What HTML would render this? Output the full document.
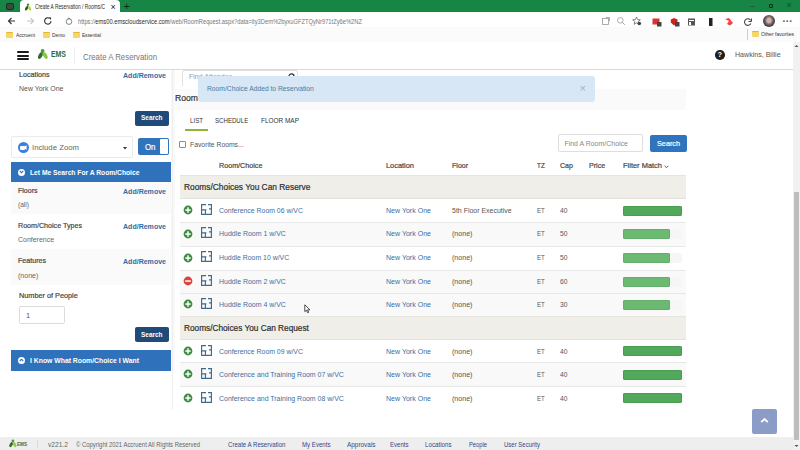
<!DOCTYPE html>
<html><head><meta charset="utf-8">
<style>
*{box-sizing:border-box;margin:0;padding:0}
html,body{width:800px;height:450px;overflow:hidden;background:#fff;font-family:"Liberation Sans",sans-serif;color:#333}
.abs{position:absolute}
.t{position:absolute;white-space:nowrap}
</style></head><body>
<div class="abs" style="left:0px;top:0px;width:800px;height:12.5px;background:#178543;"></div>
<div class="abs" style="left:120px;top:11.5px;width:680px;height:1px;background:#0f6b35;"></div>
<div class="abs" style="left:0px;top:11.5px;width:20px;height:1px;background:#0f6b35;"></div>
<div class="abs" style="left:20px;top:0px;width:100px;height:12px;background:#ffffff;border-radius:4px 4px 0 0;"></div>
<div class="abs" style="left:0px;top:12px;width:800px;height:15px;background:#ffffff;"></div>
<div class="abs" style="left:60px;top:13px;width:586px;height:13px;background:#ffffff;border-radius:7px;"></div>
<div class="abs" style="left:0px;top:27px;width:800px;height:15px;background:#fbfbfb;"></div>
<div class="abs" style="left:0px;top:41.5px;width:800px;height:1px;background:#e0e0e0;"></div>
<div class="abs" style="left:0px;top:42px;width:793px;height:27px;background:#ffffff;"></div>
<div class="abs" style="left:0px;top:69px;width:793px;height:1px;background:#dadada;"></div>
<div class="abs" style="left:0px;top:70px;width:793px;height:367px;background:#ffffff;"></div>
<div class="abs" style="left:171px;top:70px;width:4px;height:300px;background:#f9f9f9;"></div>
<div class="abs" style="left:0px;top:437px;width:793px;height:13px;background:#eeeeee;"></div>
<div class="abs" style="left:793px;top:42px;width:7px;height:408px;background:#f1f1f1;"></div>
<div class="abs" style="left:794px;top:192px;width:5px;height:248px;background:#bdbdbd;"></div>
<svg class="abs" style="left:793px;top:43px" width="7" height="6" viewBox="0 0 7 6"><path d="M1.5 4L3.5 2L5.5 4Z" fill="#555"/></svg>
<svg class="abs" style="left:793px;top:443px" width="7" height="6" viewBox="0 0 7 6"><path d="M1.5 2L3.5 4L5.5 2Z" fill="#555"/></svg>
<div class="t" style="left:35.0px;top:3.9px;font-size:6.30px;line-height:6.30px;color:#2a2a2a;transform:scaleX(0.769);transform-origin:0 0;">Create A Reservation / Rooms/C</div>
<div class="t" style="left:110.5px;top:2.6px;font-size:9.00px;line-height:9.00px;color:#222;">×</div>
<div class="t" style="left:123.5px;top:1.1px;font-size:11.00px;line-height:11.00px;color:#0a2a14;">+</div>
<div class="abs" style="left:5.5px;top:3px;width:8px;height:7px;background:#3b4a40;border-radius:2px;border:1px solid #1d2a22;"></div>
<svg class="abs" style="left:24px;top:3px" width="8" height="8" viewBox="0 0 8 8"><ellipse cx="2.6" cy="5.3" rx="1.3" ry="2.4" transform="rotate(25 2.6 5.3)" fill="#2a5a2a"/><ellipse cx="5.6" cy="5.3" rx="1.3" ry="2.4" transform="rotate(-25 5.6 5.3)" fill="#b5d33a"/><circle cx="4" cy="1.8" r="1.2" fill="#4a8a3a"/></svg>
<svg class="abs" style="left:7px;top:16px" width="9" height="10" viewBox="0 0 9 10"><path d="M8 5H1.5M4.5 2L1.5 5L4.5 8" stroke="#333" stroke-width="1.1" fill="none"/></svg>
<svg class="abs" style="left:26px;top:16px" width="9" height="10" viewBox="0 0 9 10"><path d="M1 5H7.5M4.5 2L7.5 5L4.5 8" stroke="#c8c8c8" stroke-width="1.1" fill="none"/></svg>
<svg class="abs" style="left:43px;top:16px" width="10" height="10" viewBox="0 0 10 10"><path d="M8 5A3.2 3.2 0 1 1 6.6 2.3" stroke="#333" stroke-width="1.1" fill="none"/><path d="M5.6 1.2L8.2 1.5L7.8 4Z" fill="#333"/></svg>
<svg class="abs" style="left:65px;top:16px" width="8" height="10" viewBox="0 0 8 10"><circle cx="4" cy="5.6" r="2.8" stroke="#777" stroke-width="0.9" fill="none"/><path d="M2.6 3.2L4 1.8L5.4 3.2" stroke="#777" stroke-width="0.9" fill="none"/></svg>
<div class="t" style="left:78px;top:17.8px;font-size:6.8px;line-height:8px;color:#777;transform-origin:0 0;transform:scaleX(0.848);">https://<span style="color:#2a2a2a">ems00.emscloudservice.com</span>/web/RoomRequest.aspx?data=ity3Dem%2byxuGFZTQyNr971tZy6e%2NZ</div>
<svg class="abs" style="left:601px;top:16px" width="10" height="10" viewBox="0 0 10 10"><rect x="1.5" y="2.5" width="6" height="6" stroke="#999" stroke-width="0.8" fill="none"/><path d="M5 1.5H8.5V5" stroke="#999" stroke-width="0.8" fill="none"/></svg>
<svg class="abs" style="left:616px;top:16px" width="10" height="10" viewBox="0 0 10 10"><circle cx="4.3" cy="4.3" r="2.8" stroke="#999" stroke-width="0.8" fill="none"/><path d="M6.3 6.3L8.8 8.8" stroke="#999" stroke-width="0.9"/></svg>
<svg class="abs" style="left:632px;top:16px" width="10" height="10" viewBox="0 0 10 10"><path d="M4.5 1L5.6 3.6L8.3 3.8L6.2 5.6L6.9 8.3L4.5 6.8L2.1 8.3L2.8 5.6L0.7 3.8L3.4 3.6Z" stroke="#666" stroke-width="0.8" fill="none"/><circle cx="7.3" cy="7.5" r="1.8" fill="#444"/></svg>
<svg class="abs" style="left:652px;top:17px" width="10" height="10" viewBox="0 0 10 10"><rect x="0.5" y="1.5" width="7" height="6" fill="#d33" /><rect x="5" y="5" width="4.5" height="4.5" fill="#444"/></svg>
<svg class="abs" style="left:670px;top:17px" width="10" height="10" viewBox="0 0 10 10"><path d="M0.8 2.5L4 1L7.5 2.5V5.5L4 8.5L0.8 5.5Z" fill="#c22"/><rect x="5" y="5" width="4.5" height="4.5" fill="#444"/></svg>
<svg class="abs" style="left:687px;top:17px" width="10" height="10" viewBox="0 0 10 10"><rect x="1" y="1.5" width="7" height="7" fill="#555"/><rect x="2" y="3" width="5" height="1" fill="#fff"/><rect x="2" y="5" width="2" height="3" fill="#fff"/></svg>
<svg class="abs" style="left:706px;top:17px" width="10" height="10" viewBox="0 0 10 10"><rect x="3" y="1" width="3.5" height="8" fill="#222"/></svg>
<svg class="abs" style="left:724px;top:17px" width="10" height="10" viewBox="0 0 10 10"><path d="M1 2L5 4L3 7L6 8.5L9 6L5 1Z" fill="#e44"/></svg>
<svg class="abs" style="left:743px;top:17px" width="10" height="10" viewBox="0 0 10 10"><path d="M7.6 3.3A3.3 3.3 0 1 0 7.8 6.5" stroke="#444" stroke-width="1.1" fill="none"/><path d="M5.5 4.5H8.5V1.5" stroke="#444" stroke-width="1" fill="none"/></svg>
<div class="abs" style="left:763px;top:15px;width:12px;height:12px;border-radius:50%;background:radial-gradient(ellipse at 50% 45%,#d2b4a6 0 22%,#8a7670 38%,#4a4650 60%,#2e2e34 80%);"></div>
<div class="t" style="left:782.5px;top:16.6px;font-size:10.00px;line-height:10.00px;color:#555;font-weight:bold;">···</div>
<div class="abs" style="left:750px;top:5.5px;width:5px;height:1px;background:#245c35;"></div>
<div class="abs" style="left:768.5px;top:3.5px;width:4.5px;height:4.5px;background:transparent;border:1.2px solid #0a2a14;border-radius:1px;"></div>
<div class="t" style="left:786.5px;top:1.4px;font-size:9.00px;line-height:9.00px;color:#1d4a2a;">×</div>
<div class="abs" style="left:6px;top:32.0px;width:6.5px;height:6px;background:#f5d766;border-radius:1px;border-top:1.5px solid #e3b53a"></div>
<div class="t" style="left:16.0px;top:32.1px;font-size:6.00px;line-height:6.00px;color:#333;transform:scaleX(0.802);transform-origin:0 0;">Accruent</div>
<div class="abs" style="left:43px;top:32.0px;width:6.5px;height:6px;background:#f5d766;border-radius:1px;border-top:1.5px solid #e3b53a"></div>
<div class="t" style="left:52.0px;top:32.1px;font-size:6.00px;line-height:6.00px;color:#333;transform:scaleX(0.812);transform-origin:0 0;">Demo</div>
<div class="abs" style="left:73px;top:32.0px;width:6.5px;height:6px;background:#f5d766;border-radius:1px;border-top:1.5px solid #e3b53a"></div>
<div class="t" style="left:82.0px;top:32.1px;font-size:6.00px;line-height:6.00px;color:#333;transform:scaleX(0.780);transform-origin:0 0;">Essential</div>
<div class="abs" style="left:747px;top:29px;width:1px;height:11px;background:#cfcfcf;"></div>
<div class="abs" style="left:752px;top:31.0px;width:6.5px;height:6px;background:#f5d766;border-radius:1px;border-top:1.5px solid #e3b53a"></div>
<div class="t" style="left:761.0px;top:31.1px;font-size:6.00px;line-height:6.00px;color:#333;transform:scaleX(0.839);transform-origin:0 0;">Other favorites</div>
<div class="abs" style="left:16.5px;top:50.8px;width:12px;height:2px;background:#1a1a1a;border-radius:1px;"></div>
<div class="abs" style="left:16.5px;top:54.6px;width:12px;height:2px;background:#1a1a1a;border-radius:1px;"></div>
<div class="abs" style="left:16.5px;top:58.4px;width:12px;height:2px;background:#1a1a1a;border-radius:1px;"></div>
<svg class="abs" style="left:36px;top:48px" width="14" height="13" viewBox="0 0 14 13"><ellipse cx="6.6" cy="2.9" rx="1.9" ry="2" fill="#4f9a3c"/><ellipse cx="4.4" cy="7.6" rx="1.9" ry="3.6" transform="rotate(28 4.4 7.6)" fill="#2f6d2f"/><ellipse cx="9.2" cy="7.6" rx="1.9" ry="3.6" transform="rotate(-28 9.2 7.6)" fill="#8dc440"/></svg>
<div class="t" style="left:51.0px;top:51.2px;font-size:8.20px;line-height:8.20px;color:#2f6a38;font-weight:bold;transform:scaleX(0.844);transform-origin:0 0;">EMS</div>
<div class="abs" style="left:74px;top:47px;width:1px;height:17px;background:#eeeeee;"></div>
<div class="t" style="left:83.0px;top:52.8px;font-size:8.60px;line-height:8.60px;color:#777;transform:scaleX(0.911);transform-origin:0 0;">Create A Reservation</div>
<div class="abs" style="left:715px;top:50.2px;width:9.6px;height:9.6px;border-radius:50%;background:#1e1e1e;color:#fff;font:bold 7.4px/9.8px 'Liberation Sans',sans-serif;text-align:center">?</div>
<div class="t" style="left:735.4px;top:51.4px;font-size:8.00px;line-height:8.00px;color:#555;transform:scaleX(0.884);transform-origin:0 0;">Hawkins, Billie</div>
<div class="t" style="left:18.8px;top:71.3px;font-size:7.60px;line-height:7.60px;color:#444;-webkit-text-stroke:0.2px #444;transform:scaleX(0.938);transform-origin:0 0;">Locations</div>
<div class="t" style="left:123.0px;top:71.6px;font-size:7.00px;line-height:7.00px;color:#356a9e;font-weight:bold;transform:scaleX(1.005);transform-origin:0 0;">Add/Remove</div>
<div class="t" style="left:18.8px;top:85.0px;font-size:7.60px;line-height:7.60px;color:#555;transform:scaleX(0.916);transform-origin:0 0;">New York One</div>
<div class="abs" style="left:135px;top:110.5px;width:34px;height:15px;background:#1f4b7a;border-radius:2px;"></div>
<div class="t" style="left:141.0px;top:114.3px;font-size:7.60px;line-height:7.60px;color:#fff;font-weight:bold;transform:scaleX(0.848);transform-origin:0 0;">Search</div>
<div class="abs" style="left:10.5px;top:136px;width:122px;height:22px;background:#fff;border:1px solid #ebebeb;border-radius:2px;"></div>
<div class="abs" style="left:17.5px;top:142px;width:11px;height:11px;border-radius:50%;background:#3b82e0"></div>
<div class="abs" style="left:20px;top:145.5px;width:4.5px;height:4px;background:#fff;border-radius:1px;"></div>
<svg class="abs" style="left:24px;top:145px" width="3" height="5" viewBox="0 0 3 5"><path d="M0 1.8L2.6 0.3V4.7L0 3.2Z" fill="#fff"/></svg>
<div class="t" style="left:32.0px;top:143.7px;font-size:7.76px;line-height:7.76px;color:#666;">Include Zoom</div>
<svg class="abs" style="left:122.5px;top:146.5px" width="4" height="3" viewBox="0 0 4 3"><path d="M0 0H4L2 2.5Z" fill="#333"/></svg>
<div class="abs" style="left:138px;top:137.5px;width:31px;height:17.5px;background:#2f74bd;border-radius:2px;"></div>
<div class="abs" style="left:160px;top:138.5px;width:8px;height:15.5px;background:#fff;border-radius:1px;"></div>
<div class="t" style="left:145.0px;top:142.6px;font-size:8.50px;line-height:8.50px;color:#fff;-webkit-text-stroke:0.2px #fff;transform:scaleX(0.926);transform-origin:0 0;">On</div>
<div class="abs" style="left:10.5px;top:162px;width:160.5px;height:20px;background:#2f72bb;"></div>
<div class="abs" style="left:17.5px;top:168.5px;width:7px;height:7px;border-radius:50%;background:#fff"></div>
<svg class="abs" style="left:18.5px;top:170px" width="5" height="4" viewBox="0 0 5 4"><path d="M0.8 1L2.5 2.8L4.2 1" stroke="#2f72bb" stroke-width="1.1" fill="none"/></svg>
<div class="t" style="left:29.5px;top:168.9px;font-size:7.60px;line-height:7.60px;color:#fff;font-weight:bold;transform:scaleX(0.883);transform-origin:0 0;">Let Me Search For A Room/Choice</div>
<div class="abs" style="left:10.5px;top:182px;width:160.5px;height:32px;background:#fafafa;"></div>
<div class="abs" style="left:10.5px;top:249px;width:160.5px;height:36px;background:#fafafa;"></div>
<div class="t" style="left:18.3px;top:187.3px;font-size:7.60px;line-height:7.60px;color:#444;-webkit-text-stroke:0.2px #444;transform:scaleX(0.928);transform-origin:0 0;">Floors</div>
<div class="t" style="left:123.0px;top:187.6px;font-size:7.00px;line-height:7.00px;color:#356a9e;font-weight:bold;transform:scaleX(1.005);transform-origin:0 0;">Add/Remove</div>
<div class="t" style="left:18.3px;top:201.1px;font-size:7.00px;line-height:7.00px;color:#666;transform:scaleX(0.943);transform-origin:0 0;">(all)</div>
<div class="t" style="left:18.3px;top:222.3px;font-size:7.60px;line-height:7.60px;color:#444;-webkit-text-stroke:0.2px #444;transform:scaleX(0.937);transform-origin:0 0;">Room/Choice Types</div>
<div class="t" style="left:123.0px;top:222.6px;font-size:7.00px;line-height:7.00px;color:#356a9e;font-weight:bold;transform:scaleX(1.005);transform-origin:0 0;">Add/Remove</div>
<div class="t" style="left:18.3px;top:236.0px;font-size:7.00px;line-height:7.00px;color:#666;transform:scaleX(0.995);transform-origin:0 0;">Conference</div>
<div class="t" style="left:18.3px;top:257.3px;font-size:7.60px;line-height:7.60px;color:#444;-webkit-text-stroke:0.2px #444;transform:scaleX(0.934);transform-origin:0 0;">Features</div>
<div class="t" style="left:123.0px;top:257.6px;font-size:7.00px;line-height:7.00px;color:#356a9e;font-weight:bold;transform:scaleX(1.005);transform-origin:0 0;">Add/Remove</div>
<div class="t" style="left:18.3px;top:271.6px;font-size:7.00px;line-height:7.00px;color:#666;transform:scaleX(1.003);transform-origin:0 0;">(none)</div>
<div class="t" style="left:18.8px;top:292.3px;font-size:7.60px;line-height:7.60px;color:#444;-webkit-text-stroke:0.2px #444;transform:scaleX(0.959);transform-origin:0 0;">Number of People</div>
<div class="abs" style="left:18.75px;top:306px;width:46px;height:18px;background:#fff;border:1px solid #dcdcdc;border-radius:2px;"></div>
<div class="t" style="left:26.0px;top:311.8px;font-size:7.50px;line-height:7.50px;color:#555;">1</div>
<div class="abs" style="left:135px;top:327px;width:34px;height:15px;background:#1f4b7a;border-radius:2px;"></div>
<div class="t" style="left:141.0px;top:331.3px;font-size:7.60px;line-height:7.60px;color:#fff;font-weight:bold;transform:scaleX(0.848);transform-origin:0 0;">Search</div>
<div class="abs" style="left:10.5px;top:350px;width:160.5px;height:20.5px;background:#2f72bb;"></div>
<div class="abs" style="left:17.5px;top:356.5px;width:7px;height:7px;border-radius:50%;background:#fff"></div>
<svg class="abs" style="left:18.5px;top:358px" width="5" height="4" viewBox="0 0 5 4"><path d="M0.8 3L2.5 1.2L4.2 3" stroke="#2f72bb" stroke-width="1.1" fill="none"/></svg>
<div class="t" style="left:29.5px;top:357.3px;font-size:7.60px;line-height:7.60px;color:#fff;font-weight:bold;transform:scaleX(0.899);transform-origin:0 0;">I Know What Room/Choice I Want</div>
<div class="abs" style="left:172px;top:70px;width:1px;height:340px;background:#efefef;"></div>
<div class="abs" style="left:180px;top:70px;width:125px;height:16px;overflow:hidden">
<div class="abs" style="left:2.4px;top:0px;width:115.6px;height:18px;background:#fff;border:1px solid #e0e0e0;border-radius:2px;"></div>
<div class="t" style="left:9.0px;top:2.5px;font-size:7.60px;line-height:7.60px;color:#999;transform:scaleX(0.928);transform-origin:0 0;">Find Attendee</div>
<svg class="abs" style="left:106.5px;top:2px" width="9" height="9" viewBox="0 0 9 9"><circle cx="4.5" cy="4.5" r="2.6" stroke="#333" stroke-width="1.2" fill="none"/></svg>
</div>
<div class="abs" style="left:175px;top:89px;width:511px;height:21px;background:#fafafa;"></div>
<div class="t" style="left:175.0px;top:93.6px;font-size:9.00px;line-height:9.00px;color:#333;-webkit-text-stroke:0.2px #333;transform:scaleX(0.958);transform-origin:0 0;">Room</div>
<div class="abs" style="left:198px;top:76.3px;width:396.5px;height:25.5px;background:#d7e7f5;border-radius:3px;"></div>
<div class="t" style="left:207.0px;top:85.7px;font-size:6.73px;line-height:6.73px;color:#4f7a9c;">Room/Choice Added to Reservation</div>
<div class="t" style="left:579.5px;top:83.4px;font-size:11.00px;line-height:11.00px;color:#a3b3c2;">×</div>
<div class="t" style="left:190.0px;top:117.2px;font-size:7.40px;line-height:7.40px;color:#333;transform:scaleX(0.832);transform-origin:0 0;">LIST</div>
<div class="t" style="left:214.7px;top:117.2px;font-size:7.40px;line-height:7.40px;color:#333;transform:scaleX(0.826);transform-origin:0 0;">SCHEDULE</div>
<div class="t" style="left:261.0px;top:117.2px;font-size:7.40px;line-height:7.40px;color:#333;transform:scaleX(0.872);transform-origin:0 0;">FLOOR MAP</div>
<div class="abs" style="left:185px;top:128.5px;width:23px;height:2px;background:#8db53c;"></div>
<div class="abs" style="left:179px;top:141.3px;width:7px;height:7px;background:#fff;border:1px solid #8a8a8a;border-radius:1px;"></div>
<div class="t" style="left:190.0px;top:140.6px;font-size:7.60px;line-height:7.60px;color:#555;transform:scaleX(0.896);transform-origin:0 0;">Favorite Rooms...</div>
<div class="abs" style="left:557.6px;top:134.4px;width:85.4px;height:17.2px;background:#fff;border:1px solid #dedede;border-radius:2px;"></div>
<div class="t" style="left:564.4px;top:139.6px;font-size:6.98px;line-height:6.98px;color:#888;">Find A Room/Choice</div>
<div class="abs" style="left:650px;top:135px;width:36.6px;height:17px;background:#2f74bd;border-radius:2px;"></div>
<div class="t" style="left:657.0px;top:139.7px;font-size:8.00px;line-height:8.00px;color:#fff;-webkit-text-stroke:0.2px #fff;transform:scaleX(0.907);transform-origin:0 0;">Search</div>
<div class="t" style="left:219.0px;top:162.3px;font-size:7.60px;line-height:7.60px;color:#444;-webkit-text-stroke:0.2px #444;transform:scaleX(0.943);transform-origin:0 0;">Room/Choice</div>
<div class="t" style="left:385.6px;top:162.3px;font-size:7.60px;line-height:7.60px;color:#444;-webkit-text-stroke:0.2px #444;transform:scaleX(0.975);transform-origin:0 0;">Location</div>
<div class="t" style="left:452.0px;top:162.3px;font-size:7.60px;line-height:7.60px;color:#444;-webkit-text-stroke:0.2px #444;transform:scaleX(0.936);transform-origin:0 0;">Floor</div>
<div class="t" style="left:536.7px;top:162.3px;font-size:7.60px;line-height:7.60px;color:#444;-webkit-text-stroke:0.2px #444;transform:scaleX(0.840);transform-origin:0 0;">TZ</div>
<div class="t" style="left:559.5px;top:162.3px;font-size:7.60px;line-height:7.60px;color:#444;-webkit-text-stroke:0.2px #444;transform:scaleX(0.932);transform-origin:0 0;">Cap</div>
<div class="t" style="left:588.7px;top:162.3px;font-size:7.60px;line-height:7.60px;color:#444;-webkit-text-stroke:0.2px #444;transform:scaleX(0.936);transform-origin:0 0;">Price</div>
<div class="t" style="left:622.8px;top:162.3px;font-size:7.60px;line-height:7.60px;color:#444;-webkit-text-stroke:0.2px #444;transform:scaleX(0.983);transform-origin:0 0;">Filter Match</div>
<svg class="abs" style="left:664px;top:164.5px" width="5" height="4" viewBox="0 0 5 4"><path d="M0.6 0.8L2.5 2.7L4.4 0.8" stroke="#444" stroke-width="0.9" fill="none"/></svg>
<div class="abs" style="left:180px;top:174.8px;width:506px;height:24.19999999999999px;background:#efeee8;border-top:1px solid #e6e4dd;border-bottom:1px solid #e3e1da;"></div>
<div class="t" style="left:184.0px;top:183.2px;font-size:8.60px;line-height:8.60px;color:#2e2e2e;-webkit-text-stroke:0.2px #2e2e2e;transform:scaleX(0.973);transform-origin:0 0;">Rooms/Choices You Can Reserve</div>
<div class="abs" style="left:180px;top:316px;width:506px;height:24px;background:#efeee8;border-top:1px solid #e6e4dd;border-bottom:1px solid #e3e1da;"></div>
<div class="t" style="left:184.0px;top:324.3px;font-size:8.60px;line-height:8.60px;color:#2e2e2e;-webkit-text-stroke:0.2px #2e2e2e;transform:scaleX(0.961);transform-origin:0 0;">Rooms/Choices You Can Request</div>
<svg class="abs" style="left:183.1px;top:205.15px" width="10" height="10" viewBox="0 0 10 10"><circle cx="5" cy="5" r="4.4" fill="#3d8c40"/><rect x="2.3" y="4.3" width="5.4" height="1.5" fill="#fff"/><rect x="4.25" y="2.3" width="1.5" height="5.4" fill="#fff"/></svg>
<svg class="abs" style="left:200.6px;top:204.05px" width="11" height="11" viewBox="0 0 11 11"><path d="M5 0.6H0.6V10.4H10.4V0.6H7" stroke="#3f6a8e" stroke-width="1.15" fill="none"/><path d="M0.6 5.8H5.4M4.4 5.8V10.4M10.4 4.9H8" stroke="#3f6a8e" stroke-width="1.15" fill="none"/></svg>
<div class="t" style="left:219.0px;top:206.9px;font-size:7.60px;line-height:7.60px;color:#3e6e9c;transform:scaleX(0.908);transform-origin:0 0;">Conference Room 06 w/VC</div>
<div class="t" style="left:385.6px;top:206.9px;font-size:7.60px;line-height:7.60px;color:#3e6e9c;transform:scaleX(0.926);transform-origin:0 0;">New York One</div>
<div class="t" style="left:452.0px;top:206.9px;font-size:7.60px;line-height:7.60px;color:#555;transform:scaleX(0.918);transform-origin:0 0;">5th Floor Executive</div>
<div class="t" style="left:537.0px;top:206.9px;font-size:7.60px;line-height:7.60px;color:#555;transform:scaleX(0.803);transform-origin:0 0;">ET</div>
<div class="t" style="left:560.0px;top:206.9px;font-size:7.60px;line-height:7.60px;color:#555;transform:scaleX(0.887);transform-origin:0 0;">40</div>
<div class="abs" style="left:622.8px;top:205.65px;width:59.2px;height:10px;background:#f6f6f6;border-radius:2px;"></div>
<div class="abs" style="left:622.8px;top:205.65px;width:59.2px;height:10px;background:#52a85b;border-radius:2px;box-shadow:inset 0 0 0 0.6px #3f9249;"></div>
<div class="abs" style="left:180px;top:222px;width:506px;height:24px;background:#f9f9f9;"></div>
<div class="abs" style="left:180px;top:221.5px;width:506px;height:1px;background:#e8e8e8;"></div>
<svg class="abs" style="left:183.1px;top:228.5px" width="10" height="10" viewBox="0 0 10 10"><circle cx="5" cy="5" r="4.4" fill="#3d8c40"/><rect x="2.3" y="4.3" width="5.4" height="1.5" fill="#fff"/><rect x="4.25" y="2.3" width="1.5" height="5.4" fill="#fff"/></svg>
<svg class="abs" style="left:200.6px;top:227.4px" width="11" height="11" viewBox="0 0 11 11"><path d="M5 0.6H0.6V10.4H10.4V0.6H7" stroke="#3f6a8e" stroke-width="1.15" fill="none"/><path d="M0.6 5.8H5.4M4.4 5.8V10.4M10.4 4.9H8" stroke="#3f6a8e" stroke-width="1.15" fill="none"/></svg>
<div class="t" style="left:219.0px;top:230.3px;font-size:7.60px;line-height:7.60px;color:#3e6e9c;transform:scaleX(0.916);transform-origin:0 0;">Huddle Room 1 w/VC</div>
<div class="t" style="left:385.6px;top:230.3px;font-size:7.60px;line-height:7.60px;color:#3e6e9c;transform:scaleX(0.926);transform-origin:0 0;">New York One</div>
<div class="t" style="left:452.0px;top:230.3px;font-size:7.60px;line-height:7.60px;color:#555;transform:scaleX(0.933);transform-origin:0 0;">(none)</div>
<div class="t" style="left:537.0px;top:230.3px;font-size:7.60px;line-height:7.60px;color:#555;transform:scaleX(0.803);transform-origin:0 0;">ET</div>
<div class="t" style="left:560.0px;top:230.3px;font-size:7.60px;line-height:7.60px;color:#555;transform:scaleX(0.887);transform-origin:0 0;">50</div>
<div class="abs" style="left:622.8px;top:229.0px;width:59.2px;height:10px;background:#f6f6f6;border-radius:2px;"></div>
<div class="abs" style="left:622.8px;top:229.0px;width:47.36000000000001px;height:10px;background:#6cb972;border-radius:2px;box-shadow:inset 0 0 0 0.6px #5aa662;"></div>
<div class="abs" style="left:180px;top:245.5px;width:506px;height:1px;background:#e8e8e8;"></div>
<svg class="abs" style="left:183.1px;top:252.5px" width="10" height="10" viewBox="0 0 10 10"><circle cx="5" cy="5" r="4.4" fill="#3d8c40"/><rect x="2.3" y="4.3" width="5.4" height="1.5" fill="#fff"/><rect x="4.25" y="2.3" width="1.5" height="5.4" fill="#fff"/></svg>
<svg class="abs" style="left:200.6px;top:251.4px" width="11" height="11" viewBox="0 0 11 11"><path d="M5 0.6H0.6V10.4H10.4V0.6H7" stroke="#3f6a8e" stroke-width="1.15" fill="none"/><path d="M0.6 5.8H5.4M4.4 5.8V10.4M10.4 4.9H8" stroke="#3f6a8e" stroke-width="1.15" fill="none"/></svg>
<div class="t" style="left:219.0px;top:254.3px;font-size:7.60px;line-height:7.60px;color:#3e6e9c;transform:scaleX(0.909);transform-origin:0 0;">Huddle Room 10 w/VC</div>
<div class="t" style="left:385.6px;top:254.3px;font-size:7.60px;line-height:7.60px;color:#3e6e9c;transform:scaleX(0.926);transform-origin:0 0;">New York One</div>
<div class="t" style="left:452.0px;top:254.3px;font-size:7.60px;line-height:7.60px;color:#555;transform:scaleX(0.933);transform-origin:0 0;">(none)</div>
<div class="t" style="left:537.0px;top:254.3px;font-size:7.60px;line-height:7.60px;color:#555;transform:scaleX(0.803);transform-origin:0 0;">ET</div>
<div class="t" style="left:560.0px;top:254.3px;font-size:7.60px;line-height:7.60px;color:#555;transform:scaleX(0.887);transform-origin:0 0;">50</div>
<div class="abs" style="left:622.8px;top:253.0px;width:59.2px;height:10px;background:#f6f6f6;border-radius:2px;"></div>
<div class="abs" style="left:622.8px;top:253.0px;width:47.36000000000001px;height:10px;background:#6cb972;border-radius:2px;box-shadow:inset 0 0 0 0.6px #5aa662;"></div>
<div class="abs" style="left:180px;top:270px;width:506px;height:23px;background:#f9f9f9;"></div>
<div class="abs" style="left:180px;top:269.5px;width:506px;height:1px;background:#e8e8e8;"></div>
<svg class="abs" style="left:183.1px;top:276.0px" width="10" height="10" viewBox="0 0 10 10"><circle cx="5" cy="5" r="4.4" fill="#d8463e"/><rect x="2.2" y="4.3" width="5.6" height="1.5" fill="#fff"/></svg>
<svg class="abs" style="left:200.6px;top:274.9px" width="11" height="11" viewBox="0 0 11 11"><path d="M5 0.6H0.6V10.4H10.4V0.6H7" stroke="#3f6a8e" stroke-width="1.15" fill="none"/><path d="M0.6 5.8H5.4M4.4 5.8V10.4M10.4 4.9H8" stroke="#3f6a8e" stroke-width="1.15" fill="none"/></svg>
<div class="t" style="left:219.0px;top:277.8px;font-size:7.60px;line-height:7.60px;color:#3e6e9c;transform:scaleX(0.916);transform-origin:0 0;">Huddle Room 2 w/VC</div>
<div class="t" style="left:385.6px;top:277.8px;font-size:7.60px;line-height:7.60px;color:#3e6e9c;transform:scaleX(0.926);transform-origin:0 0;">New York One</div>
<div class="t" style="left:452.0px;top:277.8px;font-size:7.60px;line-height:7.60px;color:#555;transform:scaleX(0.933);transform-origin:0 0;">(none)</div>
<div class="t" style="left:537.0px;top:277.8px;font-size:7.60px;line-height:7.60px;color:#555;transform:scaleX(0.803);transform-origin:0 0;">ET</div>
<div class="t" style="left:560.0px;top:277.8px;font-size:7.60px;line-height:7.60px;color:#555;transform:scaleX(0.887);transform-origin:0 0;">60</div>
<div class="abs" style="left:622.8px;top:276.5px;width:59.2px;height:10px;background:#f6f6f6;border-radius:2px;"></div>
<div class="abs" style="left:622.8px;top:276.5px;width:47.36000000000001px;height:10px;background:#6cb972;border-radius:2px;box-shadow:inset 0 0 0 0.6px #5aa662;"></div>
<div class="abs" style="left:180px;top:293px;width:506px;height:23px;background:#f9f9f9;"></div>
<div class="abs" style="left:180px;top:292.5px;width:506px;height:1px;background:#e8e8e8;"></div>
<svg class="abs" style="left:183.1px;top:299.0px" width="10" height="10" viewBox="0 0 10 10"><circle cx="5" cy="5" r="4.4" fill="#3d8c40"/><rect x="2.3" y="4.3" width="5.4" height="1.5" fill="#fff"/><rect x="4.25" y="2.3" width="1.5" height="5.4" fill="#fff"/></svg>
<svg class="abs" style="left:200.6px;top:297.9px" width="11" height="11" viewBox="0 0 11 11"><path d="M5 0.6H0.6V10.4H10.4V0.6H7" stroke="#3f6a8e" stroke-width="1.15" fill="none"/><path d="M0.6 5.8H5.4M4.4 5.8V10.4M10.4 4.9H8" stroke="#3f6a8e" stroke-width="1.15" fill="none"/></svg>
<div class="t" style="left:219.0px;top:300.8px;font-size:7.60px;line-height:7.60px;color:#3e6e9c;transform:scaleX(0.916);transform-origin:0 0;">Huddle Room 4 w/VC</div>
<div class="t" style="left:385.6px;top:300.8px;font-size:7.60px;line-height:7.60px;color:#3e6e9c;transform:scaleX(0.926);transform-origin:0 0;">New York One</div>
<div class="t" style="left:452.0px;top:300.8px;font-size:7.60px;line-height:7.60px;color:#555;transform:scaleX(0.933);transform-origin:0 0;">(none)</div>
<div class="t" style="left:537.0px;top:300.8px;font-size:7.60px;line-height:7.60px;color:#555;transform:scaleX(0.803);transform-origin:0 0;">ET</div>
<div class="t" style="left:560.0px;top:300.8px;font-size:7.60px;line-height:7.60px;color:#555;transform:scaleX(0.887);transform-origin:0 0;">30</div>
<div class="abs" style="left:622.8px;top:299.5px;width:59.2px;height:10px;background:#f6f6f6;border-radius:2px;"></div>
<div class="abs" style="left:622.8px;top:299.5px;width:47.36000000000001px;height:10px;background:#6cb972;border-radius:2px;box-shadow:inset 0 0 0 0.6px #5aa662;"></div>
<svg class="abs" style="left:183.1px;top:345.75px" width="10" height="10" viewBox="0 0 10 10"><circle cx="5" cy="5" r="4.4" fill="#3d8c40"/><rect x="2.3" y="4.3" width="5.4" height="1.5" fill="#fff"/><rect x="4.25" y="2.3" width="1.5" height="5.4" fill="#fff"/></svg>
<svg class="abs" style="left:200.6px;top:344.65px" width="11" height="11" viewBox="0 0 11 11"><path d="M5 0.6H0.6V10.4H10.4V0.6H7" stroke="#3f6a8e" stroke-width="1.15" fill="none"/><path d="M0.6 5.8H5.4M4.4 5.8V10.4M10.4 4.9H8" stroke="#3f6a8e" stroke-width="1.15" fill="none"/></svg>
<div class="t" style="left:219.0px;top:347.5px;font-size:7.60px;line-height:7.60px;color:#3e6e9c;transform:scaleX(0.908);transform-origin:0 0;">Conference Room 09 w/VC</div>
<div class="t" style="left:385.6px;top:347.5px;font-size:7.60px;line-height:7.60px;color:#3e6e9c;transform:scaleX(0.926);transform-origin:0 0;">New York One</div>
<div class="t" style="left:452.0px;top:347.5px;font-size:7.60px;line-height:7.60px;color:#555;transform:scaleX(0.933);transform-origin:0 0;">(none)</div>
<div class="t" style="left:537.0px;top:347.5px;font-size:7.60px;line-height:7.60px;color:#555;transform:scaleX(0.803);transform-origin:0 0;">ET</div>
<div class="t" style="left:560.0px;top:347.5px;font-size:7.60px;line-height:7.60px;color:#555;transform:scaleX(0.887);transform-origin:0 0;">40</div>
<div class="abs" style="left:622.8px;top:346.25px;width:59.2px;height:10px;background:#f6f6f6;border-radius:2px;"></div>
<div class="abs" style="left:622.8px;top:346.25px;width:59.2px;height:10px;background:#52a85b;border-radius:2px;box-shadow:inset 0 0 0 0.6px #3f9249;"></div>
<div class="abs" style="left:180px;top:362.5px;width:506px;height:24.0px;background:#f9f9f9;"></div>
<div class="abs" style="left:180px;top:362.0px;width:506px;height:1px;background:#e8e8e8;"></div>
<svg class="abs" style="left:183.1px;top:369.0px" width="10" height="10" viewBox="0 0 10 10"><circle cx="5" cy="5" r="4.4" fill="#3d8c40"/><rect x="2.3" y="4.3" width="5.4" height="1.5" fill="#fff"/><rect x="4.25" y="2.3" width="1.5" height="5.4" fill="#fff"/></svg>
<svg class="abs" style="left:200.6px;top:367.9px" width="11" height="11" viewBox="0 0 11 11"><path d="M5 0.6H0.6V10.4H10.4V0.6H7" stroke="#3f6a8e" stroke-width="1.15" fill="none"/><path d="M0.6 5.8H5.4M4.4 5.8V10.4M10.4 4.9H8" stroke="#3f6a8e" stroke-width="1.15" fill="none"/></svg>
<div class="t" style="left:219.0px;top:370.8px;font-size:7.60px;line-height:7.60px;color:#3e6e9c;transform:scaleX(0.916);transform-origin:0 0;">Conference and Training Room 07 w/VC</div>
<div class="t" style="left:385.6px;top:370.8px;font-size:7.60px;line-height:7.60px;color:#3e6e9c;transform:scaleX(0.926);transform-origin:0 0;">New York One</div>
<div class="t" style="left:452.0px;top:370.8px;font-size:7.60px;line-height:7.60px;color:#555;transform:scaleX(0.933);transform-origin:0 0;">(none)</div>
<div class="t" style="left:537.0px;top:370.8px;font-size:7.60px;line-height:7.60px;color:#555;transform:scaleX(0.803);transform-origin:0 0;">ET</div>
<div class="t" style="left:560.0px;top:370.8px;font-size:7.60px;line-height:7.60px;color:#555;transform:scaleX(0.887);transform-origin:0 0;">40</div>
<div class="abs" style="left:622.8px;top:369.5px;width:59.2px;height:10px;background:#f6f6f6;border-radius:2px;"></div>
<div class="abs" style="left:622.8px;top:369.5px;width:59.2px;height:10px;background:#52a85b;border-radius:2px;box-shadow:inset 0 0 0 0.6px #3f9249;"></div>
<div class="abs" style="left:180px;top:386.0px;width:506px;height:1px;background:#e8e8e8;"></div>
<svg class="abs" style="left:183.1px;top:392.75px" width="10" height="10" viewBox="0 0 10 10"><circle cx="5" cy="5" r="4.4" fill="#3d8c40"/><rect x="2.3" y="4.3" width="5.4" height="1.5" fill="#fff"/><rect x="4.25" y="2.3" width="1.5" height="5.4" fill="#fff"/></svg>
<svg class="abs" style="left:200.6px;top:391.65px" width="11" height="11" viewBox="0 0 11 11"><path d="M5 0.6H0.6V10.4H10.4V0.6H7" stroke="#3f6a8e" stroke-width="1.15" fill="none"/><path d="M0.6 5.8H5.4M4.4 5.8V10.4M10.4 4.9H8" stroke="#3f6a8e" stroke-width="1.15" fill="none"/></svg>
<div class="t" style="left:219.0px;top:394.5px;font-size:7.60px;line-height:7.60px;color:#3e6e9c;transform:scaleX(0.916);transform-origin:0 0;">Conference and Training Room 08 w/VC</div>
<div class="t" style="left:385.6px;top:394.5px;font-size:7.60px;line-height:7.60px;color:#3e6e9c;transform:scaleX(0.926);transform-origin:0 0;">New York One</div>
<div class="t" style="left:452.0px;top:394.5px;font-size:7.60px;line-height:7.60px;color:#555;transform:scaleX(0.933);transform-origin:0 0;">(none)</div>
<div class="t" style="left:537.0px;top:394.5px;font-size:7.60px;line-height:7.60px;color:#555;transform:scaleX(0.803);transform-origin:0 0;">ET</div>
<div class="t" style="left:560.0px;top:394.5px;font-size:7.60px;line-height:7.60px;color:#555;transform:scaleX(0.887);transform-origin:0 0;">40</div>
<div class="abs" style="left:622.8px;top:393.25px;width:59.2px;height:10px;background:#f6f6f6;border-radius:2px;"></div>
<div class="abs" style="left:622.8px;top:393.25px;width:59.2px;height:10px;background:#52a85b;border-radius:2px;box-shadow:inset 0 0 0 0.6px #3f9249;"></div>
<svg class="abs" style="left:7.5px;top:439px" width="10" height="9" viewBox="0 0 10 9"><ellipse cx="3.1" cy="5.6" rx="1.5" ry="2.8" transform="rotate(28 3.1 5.6)" fill="#2f6d2f"/><ellipse cx="6.7" cy="5.6" rx="1.5" ry="2.8" transform="rotate(-28 6.7 5.6)" fill="#9cc83c"/><circle cx="4.9" cy="1.9" r="1.4" fill="#4f9a3c"/></svg>
<div class="t" style="left:17.0px;top:441.4px;font-size:6.00px;line-height:6.00px;color:#3a6b3c;font-weight:bold;transform:scaleX(0.769);transform-origin:0 0;">EMS</div>
<div class="abs" style="left:37px;top:440px;width:1px;height:8px;background:#d8d8d8;"></div>
<div class="t" style="left:47.5px;top:440.8px;font-size:7.00px;line-height:7.00px;color:#666;transform:scaleX(0.952);transform-origin:0 0;">v221.2</div>
<div class="t" style="left:76.0px;top:440.8px;font-size:7.00px;line-height:7.00px;color:#666;transform:scaleX(0.845);transform-origin:0 0;">© Copyright 2021 Accruent All Rights Reserved</div>
<div class="t" style="left:227.5px;top:440.8px;font-size:7.00px;line-height:7.00px;color:#34468a;transform:scaleX(0.869);transform-origin:0 0;">Create A Reservation</div>
<div class="t" style="left:301.5px;top:440.8px;font-size:7.00px;line-height:7.00px;color:#34468a;transform:scaleX(0.872);transform-origin:0 0;">My Events</div>
<div class="t" style="left:346.5px;top:440.8px;font-size:7.00px;line-height:7.00px;color:#34468a;transform:scaleX(0.916);transform-origin:0 0;">Approvals</div>
<div class="t" style="left:390.0px;top:440.8px;font-size:7.00px;line-height:7.00px;color:#34468a;transform:scaleX(0.865);transform-origin:0 0;">Events</div>
<div class="t" style="left:425.0px;top:440.8px;font-size:7.00px;line-height:7.00px;color:#34468a;transform:scaleX(0.884);transform-origin:0 0;">Locations</div>
<div class="t" style="left:468.5px;top:440.8px;font-size:7.00px;line-height:7.00px;color:#34468a;transform:scaleX(0.826);transform-origin:0 0;">People</div>
<div class="t" style="left:503.5px;top:440.8px;font-size:7.00px;line-height:7.00px;color:#34468a;transform:scaleX(0.857);transform-origin:0 0;">User Security</div>
<div class="abs" style="left:751.7px;top:408.5px;width:25.3px;height:25.5px;background:#8b9dc6;border-radius:2px;"></div>
<svg class="abs" style="left:760px;top:417px" width="9" height="7" viewBox="0 0 9 7"><path d="M1.2 5.2L4.5 2L7.8 5.2" stroke="#fff" stroke-width="1.8" fill="none"/></svg>
<svg class="abs" style="left:303.5px;top:303.5px" width="8" height="10" viewBox="0 0 8 10"><path d="M0.8 0.8V7.6L2.4 6.2L3.6 8.8L4.7 8.3L3.6 5.8H5.9Z" fill="#fff" stroke="#222" stroke-width="0.8" stroke-linejoin="round"/></svg>
</body></html>
